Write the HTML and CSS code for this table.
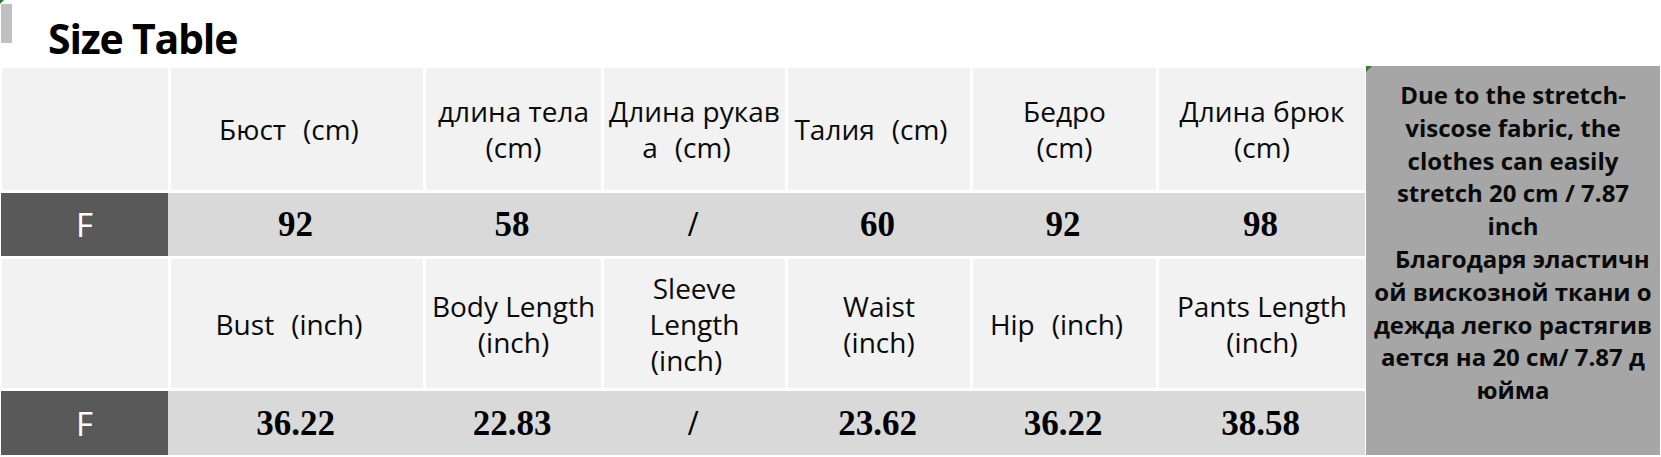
FILE: index.html
```html
<!DOCTYPE html>
<html lang="en">
<head>
<meta charset="utf-8">
<title>Size Table</title>
<link rel="stylesheet" href="styles.css">
</head>
<body>
<div class="page">
  <header class="top">
    <span class="mark"></span>
    <h1 class="title">Size Table</h1>
  </header>
  <div class="table">
    <div class="note">Due to the stretch-<br>viscose fabric, the<br>clothes can easily<br>stretch 20 cm / 7.87<br>inch<br>&nbsp;&nbsp;&nbsp;Благодаря эластичн<br>ой вискозной ткани о<br>дежда легко растягив<br>ается на 20 см/ 7.87 д<br>юйма</div>

    <div class="hc r0 c0"></div>
    <div class="hc r0"><span>Бюст<span class="gap"></span>(cm)<span class="tail"></span></span></div>
    <div class="hc r0"><span>длина тела<br>(cm)</span></div>
    <div class="hc r0"><span>Длина рукав<br>а<span class="gap"></span>(cm)<span class="tail"></span></span></div>
    <div class="hc r0"><span>Талия<span class="gap"></span>(cm)<span class="tail"></span></span></div>
    <div class="hc r0"><span>Бедро<br>(cm)</span></div>
    <div class="hc r0"><span>Длина брюк<br>(cm)</span></div>

    <div class="size">F</div>
    <div class="num">92</div>
    <div class="num">58</div>
    <div class="num">/</div>
    <div class="num">60</div>
    <div class="num">92</div>
    <div class="num">98</div>

    <div class="hc r2 c0"></div>
    <div class="hc r2"><span>Bust<span class="gap"></span>(inch)<span class="tail"></span></span></div>
    <div class="hc r2"><span>Body Length<br>(inch)</span></div>
    <div class="hc r2"><span>Sleeve<br>Length<br>(inch)<span class="tail"></span></span></div>
    <div class="hc r2"><span>Waist<br>(inch)</span></div>
    <div class="hc r2"><span>Hip<span class="gap"></span>(inch)<span class="tail"></span></span></div>
    <div class="hc r2"><span>Pants Length<br>(inch)</span></div>

    <div class="size">F</div>
    <div class="num">36.22</div>
    <div class="num">22.83</div>
    <div class="num">/</div>
    <div class="num">23.62</div>
    <div class="num">36.22</div>
    <div class="num">38.58</div>
  </div>
</div>
</body>
</html>
```
FILE: styles.css
```css
html, body {
  margin: 0;
  padding: 0;
  background: #ffffff;
}

.page {
  position: relative;
  width: 1661px;
  height: 457px;
  overflow: hidden;
}

.page::before {
  content: "";
  position: absolute;
  left: 0;
  top: 0;
  border-top: 4px solid #2e7d32;
  border-right: 4px solid transparent;
}

.top {
  display: flex;
  align-items: flex-start;
  height: 66px;
}

.mark {
  display: block;
  width: 11px;
  height: 39px;
  margin: 4px 0 0 1px;
  background: #c0c0c0;
}

.title {
  margin: 17px 0 0 36px;
  font: 700 41px/43px "Open Sans", "Noto Sans", sans-serif;
  letter-spacing: -1.2px;
  color: #000;
}

.table {
  display: grid;
  grid-template-columns: 168px 255px 178px 184px 185px 186px 209px 295px;
  grid-template-rows: 124px 63px 129px 64px;
  row-gap: 3px;
  column-gap: 0;
}

.hc {
  display: flex;
  align-items: center;
  justify-content: center;
  text-align: center;
  background: #f2f2f2;
  border-left: 3px solid #ffffff;
  font: 400 28px/36px "Open Sans", sans-serif;
  color: #0a0a0a;
}

.hc.r0 {
  border-top: 2px solid #ffffff;
}

.hc.c0 {
  border-left-width: 2px;
}

.gap {
  display: inline-block;
  width: 17px;
}

.tail {
  display: inline-block;
  width: 16px;
}

.size {
  display: flex;
  align-items: center;
  justify-content: center;
  background: #595959;
  border-left: 1px solid #ffffff;
  color: #ffffff;
  font: 400 33px/1 "Open Sans", sans-serif;
}

.num {
  display: flex;
  align-items: center;
  justify-content: center;
  background: #d9d9d9;
  color: #000;
  font: 700 35px/1 "Liberation Serif", "Times New Roman", serif;
}

.note {
  position: relative;
  grid-column: 8;
  grid-row: 1 / span 4;
  background: #a6a6a6;
  border-left: 1px solid #ffffff;
  padding-top: 13px;
  text-align: center;
  white-space: nowrap;
  font: 700 24px/32.8px "Open Sans", sans-serif;
  color: #0a0a0a;
}

.note::before {
  content: "";
  position: absolute;
  left: 0;
  top: 0;
  border-top: 6px solid #2e7d32;
  border-right: 6px solid transparent;
}
```
